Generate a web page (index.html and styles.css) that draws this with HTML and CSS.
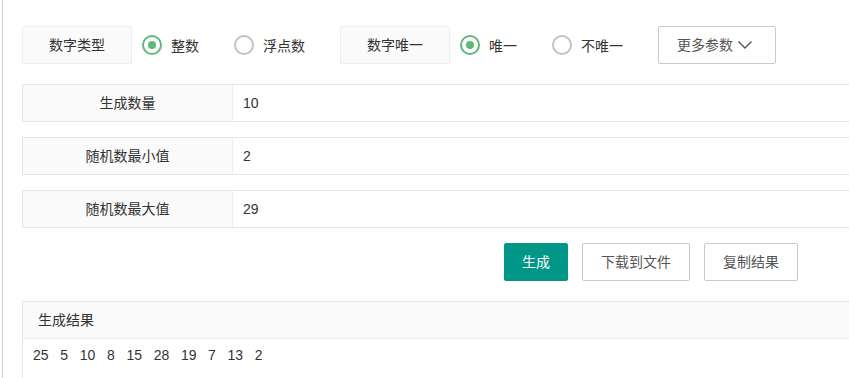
FILE: index.html
```html
<!DOCTYPE html>
<html lang="zh-CN">

<head>
    <meta charset="UTF-8">
    <meta name="viewport" content="width=device-width, initial-scale=1.0">
    <title>随机数生成器</title>
    <link rel="stylesheet" href="styles.css">
</head>

<body>
    <div class="page">
        <div class="optRow">
            <div class="optLabel">数字类型</div>
            <label class="radio checked"><i class="radioIcon"></i><span>整数</span></label>
            <label class="radio"><i class="radioIcon"></i><span>浮点数</span></label>
            <div class="optLabel">数字唯一</div>
            <label class="radio checked"><i class="radioIcon"></i><span>唯一</span></label>
            <label class="radio"><i class="radioIcon"></i><span>不唯一</span></label>
            <button class="btn btnPlain moreBtn">更多参数
                <svg class="chevron" width="16" height="16" viewBox="0 0 16 16">
                    <path d="M1.5 4.5 L8 11 L14.5 4.5" fill="none" stroke="#555" stroke-width="1.4" />
                </svg>
            </button>
        </div>

        <div class="field">
            <div class="fieldLabel">生成数量</div>
            <div class="fieldInput">10</div>
        </div>
        <div class="field">
            <div class="fieldLabel">随机数最小值</div>
            <div class="fieldInput">2</div>
        </div>
        <div class="field">
            <div class="fieldLabel">随机数最大值</div>
            <div class="fieldInput">29</div>
        </div>

        <div class="actions">
            <button class="btn btnGreen">生成</button>
            <button class="btn btnPlain">下载到文件</button>
            <button class="btn btnPlain">复制结果</button>
        </div>

        <div class="result">
            <div class="resultHead">生成结果</div>
            <div class="resultBody">25&nbsp;&nbsp;&nbsp;5&nbsp;&nbsp;&nbsp;10&nbsp;&nbsp;&nbsp;8&nbsp;&nbsp;&nbsp;15&nbsp;&nbsp;&nbsp;28&nbsp;&nbsp;&nbsp;19&nbsp;&nbsp;&nbsp;7&nbsp;&nbsp;&nbsp;13&nbsp;&nbsp;&nbsp;2</div>
        </div>
    </div>
</body>

</html>
```

FILE: styles.css
```css
body {
    margin: 0;
    overflow: hidden;
    font-family: "Liberation Sans", "Noto Sans CJK SC", sans-serif;
    font-size: 14px;
    color: #333;
    background: #fff;
}

.page {
    box-sizing: border-box;
    margin-left: 2px;
    border-left: 1px solid #cfcfcf;
    padding: 26px 0 0 19px;
    height: 378px;
    overflow: hidden;
}

.optRow {
    display: flex;
    align-items: center;
    height: 38px;
}

.optLabel {
    width: 108px;
    height: 36px;
    line-height: 36px;
    text-align: center;
    background: #fafafa;
    border: 1px solid #eee;
    margin-right: 10px;
}

.radio {
    display: flex;
    align-items: center;
    margin-right: 35px;
    cursor: pointer;
}

.radioIcon {
    box-sizing: border-box;
    width: 20px;
    height: 20px;
    border: 2px solid #c2c2c2;
    border-radius: 50%;
    margin-right: 9px;
    display: flex;
    align-items: center;
    justify-content: center;
}

.radio.checked .radioIcon {
    border-color: #5fb878;
}

.radio.checked .radioIcon::after {
    content: "";
    width: 8px;
    height: 8px;
    border-radius: 50%;
    background: #5fb878;
}

.btn {
    box-sizing: border-box;
    height: 38px;
    line-height: 36px;
    padding: 0 18px;
    font-family: inherit;
    font-size: 14px;
    border-radius: 2px;
    cursor: pointer;
}

.btnPlain {
    background: #fff;
    color: #555;
    border: 1px solid #c9c9c9;
}

.btnGreen {
    background: #009688;
    color: #fff;
    border: 1px solid #009688;
    width: 64px;
    padding: 0;
}

.moreBtn {
    display: flex;
    align-items: center;
    width: 118px;
    padding: 0 0 0 18px;
}

.chevron {
    margin-left: 4px;
}

.field {
    display: flex;
    width: 900px;
    height: 38px;
    margin-top: 15px;
    border: 1px solid #e6e6e6;
    box-sizing: border-box;
}

.optRow + .field {
    margin-top: 20px;
}

.fieldLabel {
    width: 209px;
    line-height: 36px;
    text-align: center;
    background: #fafafa;
    border-right: 1px solid #eee;
}

.fieldInput {
    flex: 1;
    line-height: 36px;
    padding-left: 10px;
}

.actions {
    display: flex;
    gap: 14px;
    margin-top: 15px;
    padding-left: 482px;
}

.result {
    width: 900px;
    margin-top: 20px;
    border: 1px solid #e6e6e6;
}

.resultHead {
    height: 36px;
    line-height: 36px;
    padding-left: 15px;
    background: #fafafa;
    border-bottom: 1px solid #eee;
}

.resultBody {
    padding: 6px 10px;
    line-height: 20px;
    height: 60px;
}
```
